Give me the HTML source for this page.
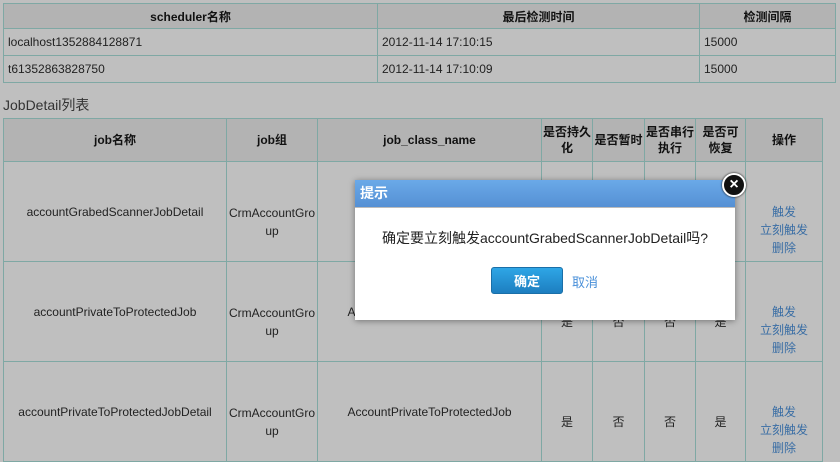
<!DOCTYPE html>
<html><head><meta charset="utf-8"><style>
body{margin:0;width:840px;height:437px;overflow:hidden;background:#bfbfbf;font-family:"Liberation Sans","Noto Sans CJK SC",sans-serif;font-size:12px;color:#222;position:relative}
table{border-collapse:collapse;position:absolute;left:3px;table-layout:fixed}
td,th{border:1px solid #7fa8a4;padding:0 4px;overflow:hidden}
th{background:#b3b3b3;font-weight:bold;color:#111}
#t1{top:3px;width:833px}
#t1 th{height:24px;text-align:center}
#t1 td{height:26px}
#t2{top:118px;width:820px;text-align:center}
#t2 tr.h th{height:42px;line-height:16px;padding:0 1px}
#t2 td{height:99px;line-height:18px;padding:0 1px}
#t2 td span{position:relative;top:10px}
#t2 td span.o{top:18px}
#t2 td span.z{top:0}
.cap{position:absolute;left:3px;top:95px;font-size:14px;color:#333}
a{color:#3a6ea5;text-decoration:none}
.dlg{position:absolute;left:355px;top:180px;width:380px;height:140px;background:#fff;box-shadow:0 1px 6px rgba(0,0,0,.4)}
.tt{height:27px;background:linear-gradient(#6aa9e8,#5590d4);border-bottom:1px solid #bbb;color:#fff;font-weight:bold;font-size:14px;line-height:27px;padding-left:5px}
.msg{position:absolute;top:48px;left:0;width:380px;text-align:center;font-size:14px;color:#222}
.btn{position:absolute;left:136px;top:87px;width:72px;height:27px;border-radius:3px;background:linear-gradient(#2ea6e6,#1d7ec0);border:1px solid #1a6fa8;color:#fff;font-weight:bold;font-size:13px;text-align:center;line-height:27px;box-sizing:border-box}
.cancel{position:absolute;left:217px;top:92px;color:#4a90d9;font-size:13px}
.x{position:absolute;left:722px;top:173px;width:20px;height:20px;border-radius:50%;background:#111;border:2px solid #fff;box-shadow:0 0 2px #000;color:#fff;font-weight:bold;text-align:center;line-height:20px;font-size:16px}
</style></head><body>
<table id="t1">
<colgroup><col style="width:374px"><col style="width:322px"><col></colgroup>
<tr><th>scheduler名称</th><th>最后检测时间</th><th>检测间隔</th></tr>
<tr><td>localhost1352884128871</td><td>2012-11-14 17:10:15</td><td>15000</td></tr>
<tr><td>t61352863828750</td><td>2012-11-14 17:10:09</td><td>15000</td></tr>
</table>
<div class="cap">JobDetail列表</div>
<table id="t2">
<colgroup><col style="width:223px"><col style="width:91px"><col style="width:224px"><col style="width:51px"><col style="width:52px"><col style="width:51px"><col style="width:50px"><col></colgroup>
<tr class="h"><th>job名称</th><th>job组</th><th>job_class_name</th><th>是否持久化</th><th>是否暂时</th><th>是否串行执行</th><th>是否可恢复</th><th>操作</th></tr>
<tr><td><span class="z">accountGrabedScannerJobDetail</span></td><td><span>CrmAccountGro<br>up</span></td><td><span class="z">AccountGrabedScannerJob</span></td><td><span>是</span></td><td><span>否</span></td><td><span>否</span></td><td><span>是</span></td><td><span class="o"><a>触发</a><br><a>立刻触发</a><br><a>删除</a></span></td></tr>
<tr><td><span class="z">accountPrivateToProtectedJob</span></td><td><span>CrmAccountGro<br>up</span></td><td><span class="z">AccountPrivateToProtectedJob</span></td><td><span>是</span></td><td><span>否</span></td><td><span>否</span></td><td><span>是</span></td><td><span class="o"><a>触发</a><br><a>立刻触发</a><br><a>删除</a></span></td></tr>
<tr><td><span class="z">accountPrivateToProtectedJobDetail</span></td><td><span>CrmAccountGro<br>up</span></td><td><span class="z">AccountPrivateToProtectedJob</span></td><td><span>是</span></td><td><span>否</span></td><td><span>否</span></td><td><span>是</span></td><td><span class="o"><a>触发</a><br><a>立刻触发</a><br><a>删除</a></span></td></tr>
</table>
<div class="dlg"><div class="tt">提示</div><div class="msg">确定要立刻触发accountGrabedScannerJobDetail吗?</div><div class="btn">确定</div><div class="cancel">取消</div></div>
<div class="x">×</div>
</body></html>
